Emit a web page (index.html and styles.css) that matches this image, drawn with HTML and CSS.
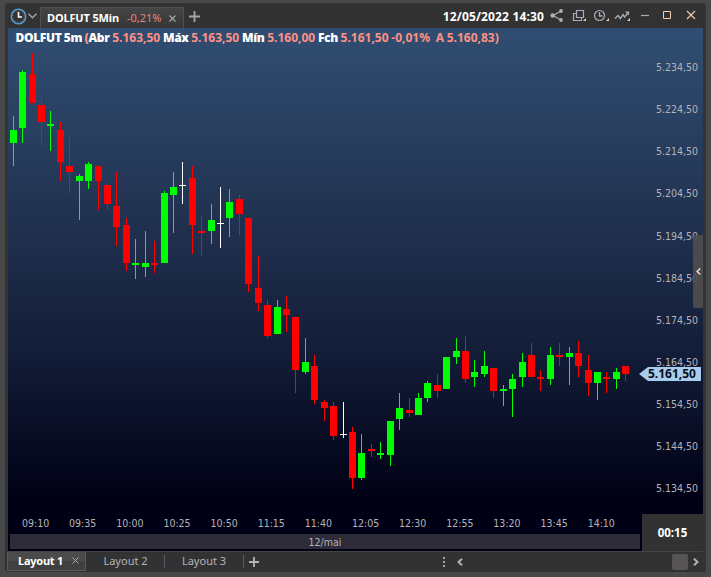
FILE: index.html
```
<!DOCTYPE html>
<html lang="pt-BR">

<head>
    <meta charset="UTF-8">
    <meta name="viewport" content="width=device-width, initial-scale=1.0">
    <title>DOLFUT 5Min</title>
    <link rel="stylesheet" href="styles.css">
</head>

<body>
    <div class="window">
        <header class="titlebar">
            <svg class="clock" width="17" height="17" viewBox="0 0 17 17">
                <circle cx="8.5" cy="8.5" r="7.2" fill="none" stroke="#4a9bd8" stroke-width="1.6" />
                <circle cx="8.5" cy="8.5" r="5.7" fill="none" stroke="#8a7a70" stroke-dasharray="1 2" />
                <path d="M8.5 4v5H12" fill="none" stroke="#fff" stroke-width="1.6" />
            </svg>
            <svg class="arrow" width="9" height="6" viewBox="0 0 9 6">
                <path d="M.5 .8l4 4 4-4" fill="none" stroke="#aaa2a8" stroke-width="1.3" />
            </svg>
            <div class="tab">
                <b>DOLFUT 5Min</b>
                <span class="change">-0,21%</span>
                <svg width="7" height="7" viewBox="0 0 7 7">
                    <path d="M.5 .5l6 6M6.5 .5l-6 6" stroke="#aaa" stroke-width="1.1" />
                </svg>
            </div>
            <svg class="add" width="11" height="11" viewBox="0 0 11 11">
                <path d="M5.5 0v11M0 5.5h11" stroke="#a8a89c" stroke-width="1.8" />
            </svg>
            <b class="date">12/05/2022 14:30</b>
            <svg class="tools" width="150" height="16" viewBox="0 0 150 16">
                <g fill="#b0b0b4" stroke="#b0b0b4">
                    <path d="M11 3L3 7.5l8 4.5" fill="none" stroke-width="1.2" />
                    <circle cx="11" cy="3" r="1.9" stroke="none" />
                    <circle cx="2.6" cy="7.5" r="2.2" stroke="none" />
                    <circle cx="11" cy="12" r="1.9" stroke="none" />
                </g>
                <g fill="none" stroke="#aaaab8">
                    <path d="M26.500 2.500h7v7h-7zM26.500 5.500h-3v7h8v-3" stroke-width="1.200" />
                    <circle cx="49.500" cy="7.500" r="5" stroke-width="1.200" />
                    <path d="M49.500 4v4h3M65 10.500l3-3 2.500 3 2.500-4 1.500 2.500 4.500-5" stroke-width="1.400" />
                    <path d="M91 7.500h8" stroke-width="1.200" />
                </g>
                <path d="M75 3.500h4v4z" fill="#aaaab8" />
                <path d="M36 10v3h-3zM59 10v3h-3zM80 10v3h-3z" fill="#f2cdb0" />
                <path d="M113.500 3.500h7v7h-7z" fill="none" stroke="#f2cdb0" />
                <path d="M137 3l8 8M145 3l-8 8" stroke="#f2cdb0" stroke-width="1.100" />
            </svg>
        </header>

        <main class="chart">
            <svg id="candles" width="634" height="523" viewBox="8 28 634 523" shape-rendering="crispEdges"></svg>

            <div class="quote">
                <b>DOLFUT 5m <i>(</i>Abr</b> <i>5.163,50</i>
                <b>Máx</b> <i>5.163,50</i>
                <b>Mín</b> <i>5.160,00</i>
                <b>Fch</b> <i>5.161,50</i>
                <i>-0,01%</i> <i class="adjust">A 5.160,83)</i>
            </div>

            <div class="prices">
                <span>5.234,50</span>
                <span>5.224,50</span>
                <span>5.214,50</span>
                <span>5.204,50</span>
                <span>5.194,50</span>
                <span>5.184,50</span>
                <span>5.174,50</span>
                <span>5.164,50</span>
                <span>5.154,50</span>
                <span>5.144,50</span>
                <span>5.134,50</span>
            </div>
            <div class="last-price"><span>5.161,50</span></div>

            <div class="handle">
                <svg width="5" height="7" viewBox="0 0 5 7">
                    <path d="M4.300 .5L1 3.500l3.300 3" fill="none" stroke="#e8e0e0" stroke-width="1.500" />
                </svg>
            </div>

            <div class="timeline">
                <div class="times">
                    <span>09:10</span><span>09:35</span><span>10:00</span><span>10:25</span><span>10:50</span>
                    <span>11:15</span><span>11:40</span><span>12:05</span><span>12:30</span><span>12:55</span>
                    <span>13:20</span><span>13:45</span><span>14:10</span>
                </div>
                <div class="day">12/mai</div>
            </div>
            <div class="countdown">00:15</div>
        </main>

        <footer class="layouts">
            <div class="layout active">
                <span>Layout 1</span>
                <svg width="7" height="7" viewBox="0 0 7 7">
                    <path d="M.5 .5l6 6M6.5 .5l-6 6" stroke="#aaa" />
                </svg>
            </div>
            <div class="layout second">Layout 2</div>
            <div class="layout third">Layout 3</div>
            <svg class="add-layout" width="10" height="10" viewBox="0 0 10 10">
                <path d="M5 0v10M0 5h10" stroke="#b0b4bc" stroke-width="1.800" />
            </svg>
            <svg class="dots" width="2" height="10" viewBox="0 0 2 10">
                <path d="M0 0h2v2H0zM0 4h2v2H0zM0 8h2v2H0z" fill="#a8a894" />
            </svg>
            <svg class="prev" width="6" height="8" viewBox="0 0 6 8">
                <path d="M5 .7L1.500 4 5 7.300" fill="none" stroke="#b0b4bc" stroke-width="1.900" />
            </svg>
            <div class="thumb"></div>
            <svg class="next" width="6" height="8" viewBox="0 0 6 8">
                <path d="M1 .7L4.500 4 1 7.300" fill="none" stroke="#b0b4bc" stroke-width="1.900" />
            </svg>
        </footer>
    </div>

    <script src="candles.js"></script>
</body>

</html>
```
FILE: styles.css
```
* {
    box-sizing: border-box;
}

body {
    margin: 0;
    width: 711px;
    height: 577px;
    padding: 3px 5px 5px;
    overflow: hidden;
    background-color: #484848;
    font-family: "Noto Sans", sans-serif;
    font-size: 11px;
    color: #b4b4b8;
}

svg {
    display: block;
    flex: none;
}

.window {
    height: 569px;
    padding: 0 3px;
    border-radius: 3px;
    background-color: #323232;
}

/* 标题栏 */
.titlebar {
    display: flex;
    height: 25px;
    padding-left: 2px;
    align-items: center;
    white-space: nowrap;
}

.clock {
    margin-top: 1px;
}

.arrow {
    margin-left: 1px;
}

.tab {
    display: flex;
    align-items: center;
    align-self: flex-end;
    width: 144px;
    height: 21px;
    margin-left: 3px;
    padding-left: 6px;
    border: 1px solid #505050;
    border-bottom: none;
    background: linear-gradient(#454545, #363636);
}

.tab b,
.tab .change {
    position: relative;
    top: -1px;
}

.tab b {
    width: 72px;
    color: #fff;
    letter-spacing: -0.15px;
}

.tab .change {
    width: 42px;
    margin-left: 8px;
    color: #e08880;
}

.add {
    margin: 2px 0 0 5px;
}

.date {
    margin: 2px 6px 0 auto;
    color: #fff;
    font-size: 12px;
    letter-spacing: 0.15px;
}

.tools {
    margin-right: 3px;
}

/* 图表 */
.chart {
    position: relative;
    height: 523px;
    width: 695px;
    background: linear-gradient(#304e72, #243756 30%, #131d38 62%, #000014 91%);
}

.quote {
    position: absolute;
    left: 7.5px;
    top: 2px;
    font-size: 12px;
    line-height: 16px;
    font-weight: bold;
    color: #fff;
    white-space: nowrap;
    word-spacing: -0.4px;
}

.quote b {
    letter-spacing: -0.35px;
}

.quote i {
    font-style: normal;
    color: #ff9184;
}

.quote .adjust {
    margin-left: 3px;
}

.prices {
    position: absolute;
    right: 5px;
    top: 32px;
    height: 436.5px;
    display: flex;
    flex-direction: column;
    justify-content: space-between;
    font-family: "DejaVu Sans Condensed", "DejaVu Sans", sans-serif;
    font-stretch: condensed;
    font-size: 10.5px;
    line-height: 15px;
}

.last-price {
    position: absolute;
    right: 2px;
    top: 339px;
    width: 62px;
    height: 14px;
    padding-left: 9px;
    background-color: #a8cceb;
    clip-path: polygon(0 50%, 9px 0, 100% 0, 100% 100%, 9px 100%);
    font-size: 12px;
    font-weight: bold;
    line-height: 14px;
    color: #080c18;
}

.handle {
    position: absolute;
    right: 0;
    top: 207px;
    width: 10px;
    height: 73px;
    display: flex;
    align-items: center;
    justify-content: center;
    border-radius: 2px 0 0 2px;
    background-color: rgba(80, 78, 78, 0.9);
}

.timeline {
    position: absolute;
    left: 0;
    bottom: 0;
    width: 634px;
    padding: 0 2px 2px;
    font-family: "DejaVu Sans Condensed", "DejaVu Sans", sans-serif;
    font-stretch: condensed;
    font-size: 10.5px;
}

.times {
    display: grid;
    grid-template-columns: repeat(13, 47.15px);
    padding-left: 2px;
    line-height: 14px;
    margin-bottom: 4px;
    text-align: center;
}

.day {
    height: 15px;
    line-height: 16px;
    background-color: #2c2b37;
    text-align: center;
}

.countdown {
    position: absolute;
    right: 0;
    bottom: 0;
    width: 61px;
    height: 37px;
    background-color: #323232;
    font-size: 11.5px;
    font-weight: bold;
    line-height: 38px;
    text-align: center;
    color: #fff;
}

/* 底部标签 */
.layouts {
    display: flex;
    align-items: center;
    height: 20px;
    margin-left: -1px;
    border-top: 1px solid #444;
}

.layout {
    display: flex;
    align-items: center;
    justify-content: center;
    height: 13px;
    line-height: 11px;
    padding-bottom: 2px;
    border-right: 1px solid #60586a;
}

.layout.active {
    width: 79px;
    height: 19px;
    justify-content: flex-start;
    padding-left: 10px;
    border: 1px solid #5a5a5a;
    border-top: none;
    background: linear-gradient(#4b4b4b 50%, #404040 50%);
    color: #fff;
    font-weight: bold;
    letter-spacing: -0.25px;
}

.layout.active span {
    width: 54px;
}

.layout.second,
.layout.third {
    width: 79px;
}

.layout.second {
    padding-left: 1px;
}

.add-layout {
    margin-left: 5px;
}

.dots {
    margin-left: auto;
}

.prev {
    margin-left: 12px;
}

.thumb {
    width: 16px;
    height: 16px;
    margin-left: 209px;
    border-radius: 2px;
    background-color: #575455;
}

.next {
    margin: 0 4px 0 5px;
}
```
FILE: candles.js
```
// x, high, body top, body bottom, low, colour
var candles = [
    [13, 116, 130, 143, 166, "g"], [22, 70, 72, 128, 143, "g"], [32, 53, 74, 103, 103, "r"],
    [41, 97, 105, 122, 145, "r"], [50, 111, 124, 126, 151, "g"], [60, 122, 130, 162, 181, "r"],
    [69, 134, 166, 172, 193, "r"], [79, 174, 176, 181, 220, "g"], [88, 162, 164, 181, 189, "g"],
    [98, 166, 166, 181, 210, "r"], [107, 183, 185, 204, 210, "r"], [116, 172, 206, 227, 246, "r"],
    [126, 218, 225, 263, 271, "r"], [135, 239, 263, 265, 279, "g"], [145, 231, 263, 267, 277, "g"],
    [154, 241, 263, 265, 273, "r"], [164, 191, 193, 263, 263, "g"], [173, 172, 187, 195, 233, "g"],
    [182, 162, 185, 186, 204, "w"], [192, 166, 178, 225, 254, "r"], [201, 216, 231, 233, 256, "r"],
    [211, 204, 220, 231, 244, "g"], [220, 187, 223, 224, 248, "w"], [229, 189, 202, 218, 237, "g"],
    [239, 195, 199, 214, 235, "r"], [248, 218, 218, 284, 292, "r"], [258, 256, 288, 303, 311, "r"],
    [267, 300, 305, 336, 338, "r"], [277, 300, 307, 334, 334, "g"], [286, 296, 309, 315, 332, "r"],
    [295, 317, 317, 370, 393, "r"], [305, 338, 362, 372, 374, "g"], [314, 355, 366, 400, 404, "r"],
    [324, 400, 402, 408, 421, "r"], [333, 402, 406, 436, 440, "r"], [343, 402, 434, 435, 438, "w"],
    [352, 427, 432, 478, 489, "r"], [361, 434, 453, 478, 480, "g"], [371, 444, 449, 451, 457, "r"],
    [380, 442, 453, 455, 459, "g"], [390, 421, 421, 455, 466, "g"], [399, 393, 408, 419, 430, "g"],
    [409, 398, 410, 413, 417, "r"], [418, 393, 398, 415, 415, "g"], [427, 381, 383, 398, 402, "g"],
    [437, 374, 385, 391, 398, "r"], [446, 357, 357, 389, 389, "g"], [456, 338, 351, 357, 364, "g"],
    [465, 336, 351, 379, 383, "r"], [474, 360, 372, 377, 387, "g"], [484, 351, 366, 374, 377, "g"],
    [493, 368, 368, 391, 398, "r"], [503, 385, 389, 391, 406, "g"], [512, 374, 379, 389, 417, "g"],
    [522, 353, 362, 377, 387, "g"], [531, 343, 355, 377, 377, "r"], [540, 370, 377, 379, 391, "r"],
    [550, 347, 355, 379, 385, "g"], [559, 343, 355, 357, 366, "r"], [569, 347, 353, 357, 385, "g"],
    [578, 341, 353, 366, 377, "r"], [588, 355, 370, 383, 396, "r"], [597, 372, 372, 383, 400, "g"],
    [606, 372, 377, 379, 393, "r"], [616, 368, 372, 379, 389, "g"], [625, 366, 366, 374, 381, "r"]
];
var colors = { g: "#00ff00", r: "#ff0000", w: "#ffffff" };
var svg = document.getElementById("candles");

function addRect(x, y, width, height, fill) {
    var rect = document.createElementNS("http://www.w3.org/2000/svg", "rect");
    rect.setAttribute("x", x);
    rect.setAttribute("y", y);
    rect.setAttribute("width", width);
    rect.setAttribute("height", height);
    rect.setAttribute("fill", fill);
    svg.appendChild(rect);
}

for (var i = 0; i < candles.length; i++) {
    var c = candles[i];
    addRect(c[0], c[1], 1, c[4] - c[1], colors[c[5]]);
    addRect(c[0] - 3, c[2], 7, c[3] - c[2], colors[c[5]]);
}
```
